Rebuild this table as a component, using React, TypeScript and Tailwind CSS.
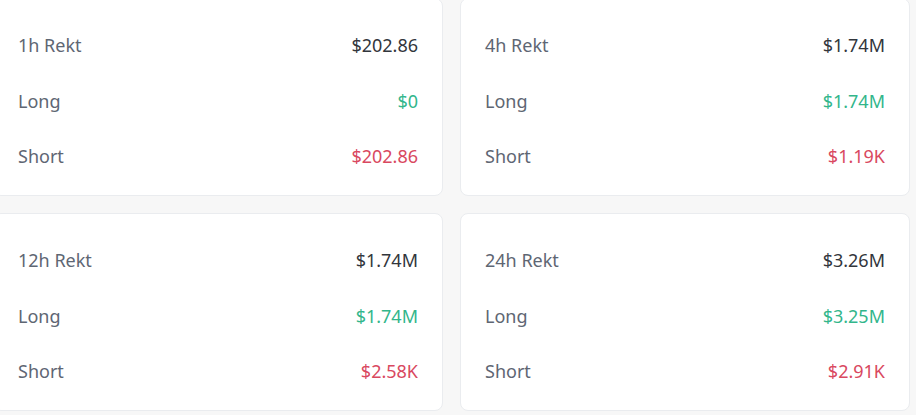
const CARDS = [
  { title: "1h Rekt", total: "$202.86", long: "$0", short: "$202.86" },
  { title: "4h Rekt", total: "$1.74M", long: "$1.74M", short: "$1.19K" },
  { title: "12h Rekt", total: "$1.74M", long: "$1.74M", short: "$2.58K" },
  { title: "24h Rekt", total: "$3.26M", long: "$3.25M", short: "$2.91K" },
];

function Row({ label, value, tone }: { label: string; value: string; tone: string }) {
  return (
    <div className="flex h-[55.5px] items-center justify-between">
      <span className="text-[#5e6673]">{label}</span>
      <span className={tone}>{value}</span>
    </div>
  );
}

export default function App() {
  return (
    <div
      className="h-[415px] w-[916px] overflow-hidden bg-[#f7f7f7] text-[18px]"
      style={{ fontFamily: '"Noto Sans", "Open Sans", sans-serif' }}
    >
      <div className="ml-[-7px] mt-[-2px] grid w-[917px] grid-cols-2 gap-[17px]">
        {CARDS.map((c) => (
          <div
            key={c.title}
            className="h-[198px] rounded-lg border border-[#eaecef] bg-white px-6 pt-[19px]"
          >
            <Row label={c.title} value={c.total} tone="text-[#32363c]" />
            <Row label="Long" value={c.long} tone="text-[#32b68b]" />
            <Row label="Short" value={c.short} tone="text-[#d94860]" />
          </div>
        ))}
      </div>
    </div>
  );
}
